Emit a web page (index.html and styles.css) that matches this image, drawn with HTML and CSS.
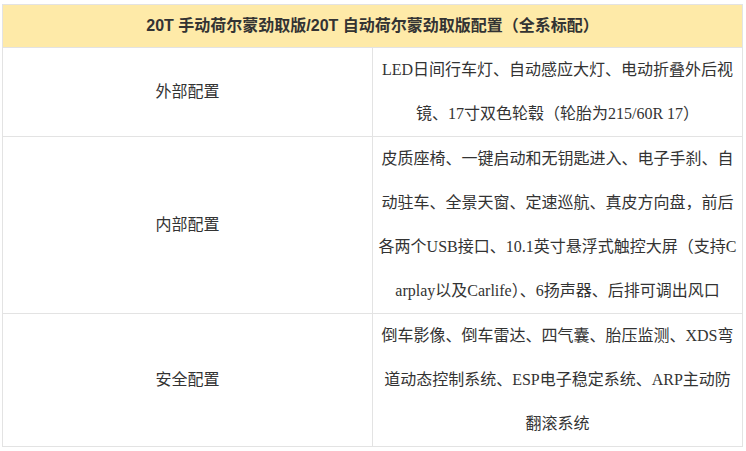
FILE: index.html
```html
<!DOCTYPE html>
<html lang="zh-CN">
<head>
<meta charset="utf-8">
<title>配置表</title>
<link rel="stylesheet" href="styles.css">
</head>
<body>
<div class="page">
  <table class="spec">
    <colgroup>
      <col class="col-name">
      <col class="col-detail">
    </colgroup>
    <thead>
      <tr>
        <th colspan="2" class="head">20T 手动荷尔蒙劲取版/20T 自动荷尔蒙劲取版配置（全系标配）</th>
      </tr>
    </thead>
    <tbody>
      <tr>
        <td class="name">外部配置</td>
        <td class="detail">LED日间行车灯、自动感应大灯、电动折叠外后视<br>镜、17寸双色轮毂（轮胎为215/60R 17）</td>
      </tr>
      <tr>
        <td class="name">内部配置</td>
        <td class="detail">皮质座椅、一键启动和无钥匙进入、电子手刹、自<br>动驻车、全景天窗、定速巡航、真皮方向盘，前后<br>各两个USB接口、10.1英寸悬浮式触控大屏（支持C<br>arplay以及Carlife）、6扬声器、后排可调出风口</td>
      </tr>
      <tr>
        <td class="name">安全配置</td>
        <td class="detail">倒车影像、倒车雷达、四气囊、胎压监测、XDS弯<br>道动态控制系统、ESP电子稳定系统、ARP主动防<br>翻滚系统</td>
      </tr>
    </tbody>
  </table>
</div>
</body>
</html>
```

FILE: styles.css
```css
html, body {
  margin: 0;
  padding: 0;
  background: #ffffff;
}

.page {
  padding: 4px 0 0 2px;
}

.spec {
  border-collapse: collapse;
  table-layout: fixed;
  width: 740px;
  color: #333333;
}

.col-name {
  width: 370px;
}

.col-detail {
  width: 370px;
}

.spec th,
.spec td {
  border: 1px solid #e3e3e3;
  padding: 0;
  text-align: center;
  vertical-align: middle;
}

.head {
  background: #feeaa8;
  height: 42px;
  font-family: "Liberation Sans", "Noto Sans CJK SC", sans-serif;
  font-weight: 700;
  font-size: 16px;
  line-height: 22px;
  color: #333333;
}

.name,
.detail {
  font-family: "Liberation Serif", "Noto Sans CJK SC", serif;
  font-size: 16px;
  line-height: 44px;
  color: #333333;
}

.detail {
  white-space: nowrap;
}
```
